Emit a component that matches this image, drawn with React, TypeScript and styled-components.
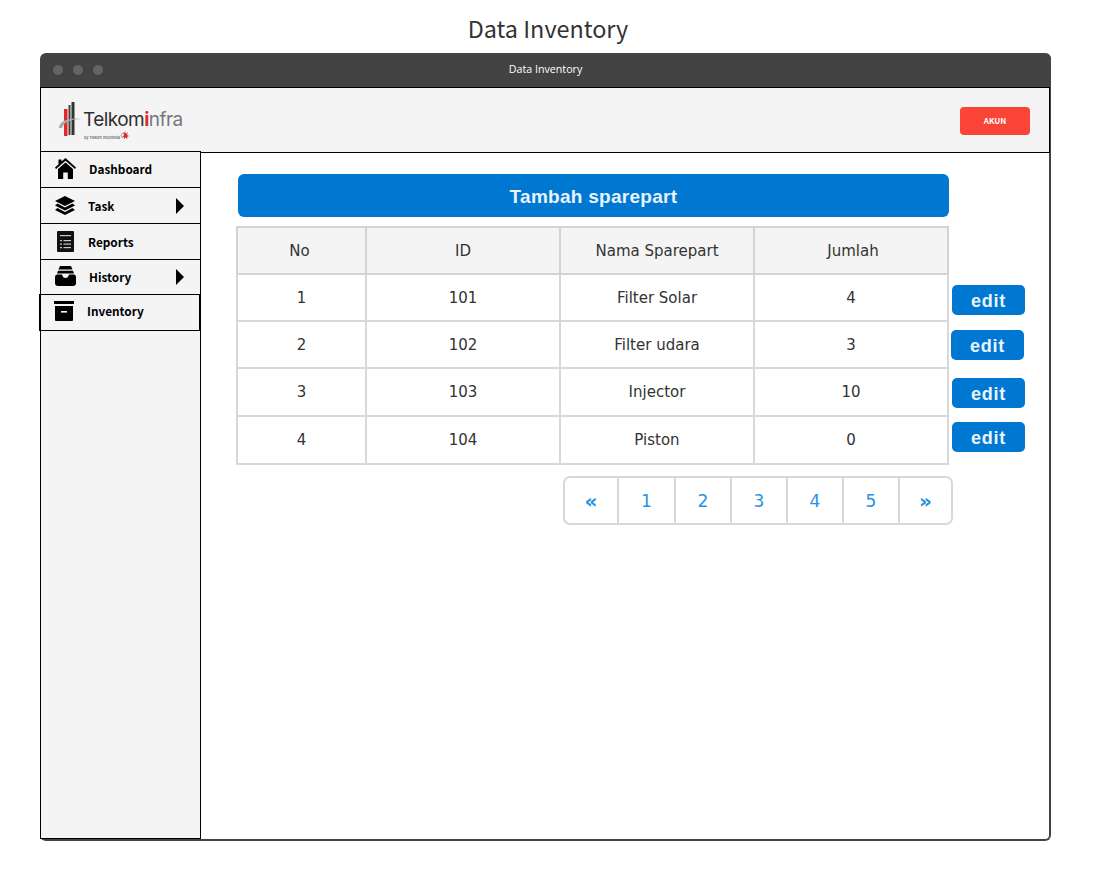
import React from 'react'
import styled, { createGlobalStyle } from 'styled-components'

const GlobalStyle = createGlobalStyle`
  html, body {
    margin: 0;
    padding: 0;
    background: #fff;
  }
`

const Page = styled.div`
  width: 1110px;
  height: 879px;
  overflow: hidden;
  font-family: 'Open Sans', sans-serif;
`

const PageTitle = styled.h1`
  margin: 0;
  height: 53px;
  padding-top: 11px;
  box-sizing: border-box;
  width: 1096px;
  text-align: center;
  font-family: 'Noto Sans CJK SC', 'Noto Sans', sans-serif;
  font-size: 23.4px;
  line-height: 35px;
  font-weight: 400;
  color: #333;
`

const Window = styled.div`
  margin-left: 40px;
  width: 1011px;
  height: 788px;
  box-sizing: border-box;
  display: flex;
  flex-direction: column;
  background: #fff;
  border-radius: 6px;
  border-right: 2px solid #434343;
  border-bottom: 2px solid #434343;
`

const TitleBar = styled.div`
  height: 34px;
  flex: none;
  margin-right: -2px;
  display: flex;
  align-items: center;
  position: relative;
  padding-left: 13px;
  gap: 10px;
  background: #434343;
  border-radius: 6px 6px 0 0;
`

const Dot = styled.span`
  width: 10px;
  height: 10px;
  border-radius: 50%;
  background: #656565;
`

const TitleText = styled.span`
  position: absolute;
  left: 0;
  right: 0;
  top: 8px;
  text-align: center;
  font-size: 10.7px;
  line-height: 17px;
  color: #fff;
`

const Header = styled.header`
  height: 66px;
  flex: none;
  box-sizing: border-box;
  display: flex;
  align-items: center;
  justify-content: space-between;
  padding: 1px 19px 0 16px;
  background: #f4f4f4;
  border: 1px solid #000;
  margin-right: -1px;
`

const AccountButton = styled.button`
  width: 70px;
  height: 28px;
  border: none;
  border-radius: 4px;
  background: #f94437;
  color: #fff;
  font-family: 'Noto Sans CJK SC', 'Noto Sans', sans-serif;
  font-size: 8px;
  font-weight: 700;
`

const LogoBox = styled.div`
  width: 128px;
  height: 40px;
  position: relative;
  font-family: 'Inter', 'Liberation Sans', sans-serif;
`

const LogoWord = styled.span`
  position: absolute;
  left: 26px;
  top: 7px;
  font-size: 19px;
  line-height: 24px;
  letter-spacing: -0.55px;
  color: #2f2f33;
  white-space: nowrap;
`

const LogoAccent = styled.span`
  color: #e0282e;
  font-weight: 700;
`

const LogoInfra = styled.span`
  color: #77777b;
`

const LogoSub = styled.span`
  position: absolute;
  left: 27px;
  top: 34px;
  font-size: 4px;
  line-height: 5px;
  letter-spacing: -0.15px;
  color: #444;
  white-space: nowrap;
`

const Body = styled.div`
  flex: 1;
  min-height: 0;
  display: flex;
`

const Sidebar = styled.nav`
  width: 161px;
  flex: none;
  margin-top: -2px;
  box-sizing: border-box;
  position: relative;
  background: #f4f4f4;
  border: 1px solid #000;
  border-top: none;
`

const NavItem = styled.div<{ $height: number; $active?: boolean; $gap: number; $lift: number }>`
  height: ${p => p.$height}px;
  box-sizing: border-box;
  display: flex;
  align-items: center;
  padding: 0 0 ${p => p.$lift}px 12px;
  gap: ${p => p.$gap}px;
  border-top: 1px solid #000;
  position: relative;
  font-family: 'Noto Sans CJK SC', 'Noto Sans', sans-serif;
  font-size: 11.8px;
  font-weight: 700;
  color: #000;
  ${p =>
    p.$active &&
    `
    margin-left: -2px;
    margin-right: -1px;
    border: 1px solid #000;
    border-right-width: 2px;
  `}
`

const NavIcon = styled.span`
  width: 24px;
  height: 24px;
  flex: none;
  display: flex;
  align-items: center;
  justify-content: center;
`

const NavArrow = styled.span`
  position: absolute;
  left: 135px;
  top: 50%;
  margin-top: -8px;
  width: 0;
  height: 0;
  border-top: 8px solid transparent;
  border-bottom: 8px solid transparent;
  border-left: 8px solid #000;
`

const Main = styled.main`
  flex: 1;
  min-width: 0;
  padding: 21px 0 0 35px;
  color: #3a3a3a;
`

const AddButton = styled.button`
  display: block;
  width: 711px;
  height: 43px;
  margin: 0 0 9px 2px;
  padding: 2px 0 0;
  border: none;
  border-radius: 6px;
  background: #0077d1;
  color: #e8f3fb;
  font-family: 'Liberation Sans', sans-serif;
  font-size: 19px;
  font-weight: 700;
  letter-spacing: 0.28px;
`

const TableRow = styled.div`
  display: flex;
  align-items: flex-start;
`

const Table = styled.table`
  width: 713px;
  flex: none;
  table-layout: fixed;
  border-collapse: collapse;
  font-family: 'DejaVu Sans', sans-serif;
  font-size: 15px;
  color: #333;
`

const HeadCell = styled.th<{ $nudge?: number }>`
  height: 47px;
  box-sizing: border-box;
  padding: 0 ${p => Math.max(-(p.$nudge ?? 0), 0) * 2}px 0 ${p => Math.max(p.$nudge ?? 0, 0) * 2}px;
  font-weight: 400;
  background: #f4f4f4;
  border: 2px solid #d3d3d3;
`

const BodyRow = styled.tr<{ $height: number }>`
  height: ${p => p.$height}px;
`

const Cell = styled.td`
  padding: 0;
  text-align: center;
  border: 2px solid #d8d8d8;
`

const EditColumn = styled.div`
  display: flex;
  flex-direction: column;
  align-items: flex-start;
  padding-top: 59px;
`

const EditButton = styled.button<{ $shift?: number; $gap?: number }>`
  width: 73px;
  height: 30px;
  padding: 3px 0 0;
  margin-left: ${p => 3 + (p.$shift ?? 0)}px;
  margin-top: ${p => p.$gap ?? 0}px;
  border: none;
  border-radius: 5px;
  background: #0077d1;
  color: #e8f3fb;
  font-family: 'Liberation Sans', sans-serif;
  font-size: 18px;
  font-weight: 700;
  letter-spacing: 0.7px;
`

const Pagination = styled.div`
  width: 390px;
  height: 49px;
  box-sizing: border-box;
  margin: 11px 0 0 327px;
  display: flex;
  border: 2px solid #d8d8d8;
  border-radius: 7px;
`

const PageCell = styled.div<{ $width: number; $arrow?: boolean }>`
  width: ${p => p.$width}px;
  flex: none;
  box-sizing: border-box;
  display: flex;
  align-items: center;
  justify-content: center;
  font-family: 'DejaVu Sans', sans-serif;
  font-size: ${p => (p.$arrow ? 20 : 17)}px;
  font-weight: ${p => (p.$arrow ? 700 : 400)};
  color: #2792e3;
  & + & {
    border-left: 2px solid #d8d8d8;
  }
`

const LogoMark = () => (
  <svg width="128" height="40" viewBox="0 0 128 40" style={{ position: 'absolute', left: 0, top: 0 }}>
    <rect x="7" y="8" width="3.5" height="27" fill="#e0282e" />
    <rect x="11.5" y="4" width="2" height="30" fill="#444" />
    <rect x="14.5" y="1" width="3" height="33" fill="#333" />
    <path d="M2 27 C2 20 12 16 25 18 C14 18 7 21 5 27 Z" fill="#a9a9ad" />
    <circle cx="66.5" cy="34.5" r="2.5" fill="none" stroke="#777" strokeWidth="0.6" />
    <path
      d="M66 31 L67 33 L68 30 L69 33 L71 31 L70 34 L72 35 L70 36 L70.5 38 L68.5 36.5 L67 38 L67 36 L65 35.5 L67 34.5 Z"
      fill="#e0282e"
    />
  </svg>
)

const HomeIcon = () => (
  <svg width="21" height="21" viewBox="0 0 21 21">
    <path d="M10.5 0 L21 9.5 L20 11 L10.5 2.8 L1 11 L0 9.5 L3.5 6.3 V1.5 H6.5 V3.6 Z" fill="#000" />
    <path d="M10.5 4.4 L18 11 V21 H12.8 V14.5 H8.2 V21 H3 V11 Z" fill="#000" />
  </svg>
)

const LayersIcon = () => (
  <svg width="20" height="19" viewBox="0 0 20 19">
    <path d="M10 0 L20 5 L10 10 L0 5 Z" fill="#000" />
    <path d="M2.5 7.5 L10 11.5 L17.5 7.5 L20 9.5 L10 14.5 L0 9.5 Z" fill="#000" />
    <path d="M2.5 12 L10 16 L17.5 12 L20 14 L10 19 L0 14 Z" fill="#000" />
  </svg>
)

const ReportIcon = () => (
  <svg width="17" height="21" viewBox="0 0 17 21">
    <rect width="17" height="21" rx="1" fill="#111" />
    <rect x="3" y="4" width="11" height="1.2" fill="#c8c8c8" />
    <rect x="3" y="9" width="2" height="1.2" fill="#c8c8c8" />
    <rect x="6.5" y="9" width="7.5" height="1.2" fill="#c8c8c8" />
    <rect x="3" y="12.5" width="2" height="1.2" fill="#c8c8c8" />
    <rect x="6.5" y="12.5" width="7.5" height="1.2" fill="#c8c8c8" />
    <rect x="3" y="16" width="2" height="1.2" fill="#c8c8c8" />
    <rect x="6.5" y="16" width="7.5" height="1.2" fill="#c8c8c8" />
  </svg>
)

const DrawerIcon = () => (
  <svg width="21" height="20" viewBox="0 0 21 20">
    <path d="M5 0 H16 L17.5 3.5 H3.5 Z" fill="#000" />
    <path d="M3 4.7 H18 L19 7.5 H2 Z" fill="#000" />
    <path d="M2 8.5 H7 Q8 12 10.5 12 Q13 12 14 8.5 H19 Q21 8.5 21 11 V17 Q21 20 18 20 H3 Q0 20 0 17 V11 Q0 8.5 2 8.5 Z" fill="#000" />
  </svg>
)

const ArchiveIcon = () => (
  <svg width="20" height="20" viewBox="0 0 20 20">
    <rect width="20" height="3" fill="#000" />
    <path d="M1 5 H19 V19 Q19 20 18 20 H2 Q1 20 1 19 Z" fill="#000" />
    <rect x="7" y="10" width="6" height="1.6" fill="#f4f4f4" />
  </svg>
)

const rows = [
  { no: 1, id: 101, name: 'Filter Solar', qty: 4, height: 47 },
  { no: 2, id: 102, name: 'Filter udara', qty: 3, height: 47 },
  { no: 3, id: 103, name: 'Injector', qty: 10, height: 48 },
  { no: 4, id: 104, name: 'Piston', qty: 0, height: 48 },
]

const pages = [
  { label: '«', width: 52, arrow: true },
  { label: '1', width: 57 },
  { label: '2', width: 56 },
  { label: '3', width: 56 },
  { label: '4', width: 56 },
  { label: '5', width: 56 },
  { label: '»', width: 53, arrow: true },
]

const App: React.FC = () => {
  return (
    <Page>
      <GlobalStyle />
      <PageTitle>Data Inventory</PageTitle>
      <Window>
        <TitleBar>
          <Dot />
          <Dot />
          <Dot />
          <TitleText>Data Inventory</TitleText>
        </TitleBar>
        <Header>
          <LogoBox>
            <LogoMark />
            <LogoWord>
              Telkom<LogoAccent>i</LogoAccent>
              <LogoInfra>nfra</LogoInfra>
            </LogoWord>
            <LogoSub>by Telkom Indonesia</LogoSub>
          </LogoBox>
          <AccountButton>AKUN</AccountButton>
        </Header>
        <Body>
          <Sidebar>
            <NavItem $height={36} $gap={12} $lift={2}>
              <NavIcon>
                <HomeIcon />
              </NavIcon>
              Dashboard
            </NavItem>
            <NavItem $height={36} $gap={11} $lift={0}>
              <NavIcon>
                <LayersIcon />
              </NavIcon>
              Task
              <NavArrow />
            </NavItem>
            <NavItem $height={36} $gap={11} $lift={0}>
              <NavIcon>
                <ReportIcon />
              </NavIcon>
              Reports
            </NavItem>
            <NavItem $height={35} $gap={12} $lift={2}>
              <NavIcon>
                <DrawerIcon />
              </NavIcon>
              History
              <NavArrow />
            </NavItem>
            <NavItem $height={37} $gap={11} $lift={4} $active>
              <NavIcon>
                <ArchiveIcon />
              </NavIcon>
              Inventory
            </NavItem>
          </Sidebar>
          <Main>
            <AddButton>Tambah sparepart</AddButton>
            <TableRow>
              <Table>
                <colgroup>
                  <col style={{ width: 129 }} />
                  <col style={{ width: 194 }} />
                  <col style={{ width: 194 }} />
                  <col style={{ width: 194 }} />
                </colgroup>
                <thead>
                  <tr>
                    <HeadCell $nudge={-2}>No</HeadCell>
                    <HeadCell>ID</HeadCell>
                    <HeadCell>Nama Sparepart</HeadCell>
                    <HeadCell $nudge={2}>Jumlah</HeadCell>
                  </tr>
                </thead>
                <tbody>
                  {rows.map(row => (
                    <BodyRow key={row.id} $height={row.height}>
                      <Cell>{row.no}</Cell>
                      <Cell>{row.id}</Cell>
                      <Cell>{row.name}</Cell>
                      <Cell>{row.qty}</Cell>
                    </BodyRow>
                  ))}
                </tbody>
              </Table>
              <EditColumn>
                <EditButton>edit</EditButton>
                <EditButton $shift={-1} $gap={15}>edit</EditButton>
                <EditButton $gap={18}>edit</EditButton>
                <EditButton $gap={14}>edit</EditButton>
              </EditColumn>
            </TableRow>
            <Pagination>
              {pages.map(page => (
                <PageCell key={page.label} $width={page.width} $arrow={page.arrow}>
                  {page.label}
                </PageCell>
              ))}
            </Pagination>
          </Main>
        </Body>
      </Window>
    </Page>
  )
}

export default App
